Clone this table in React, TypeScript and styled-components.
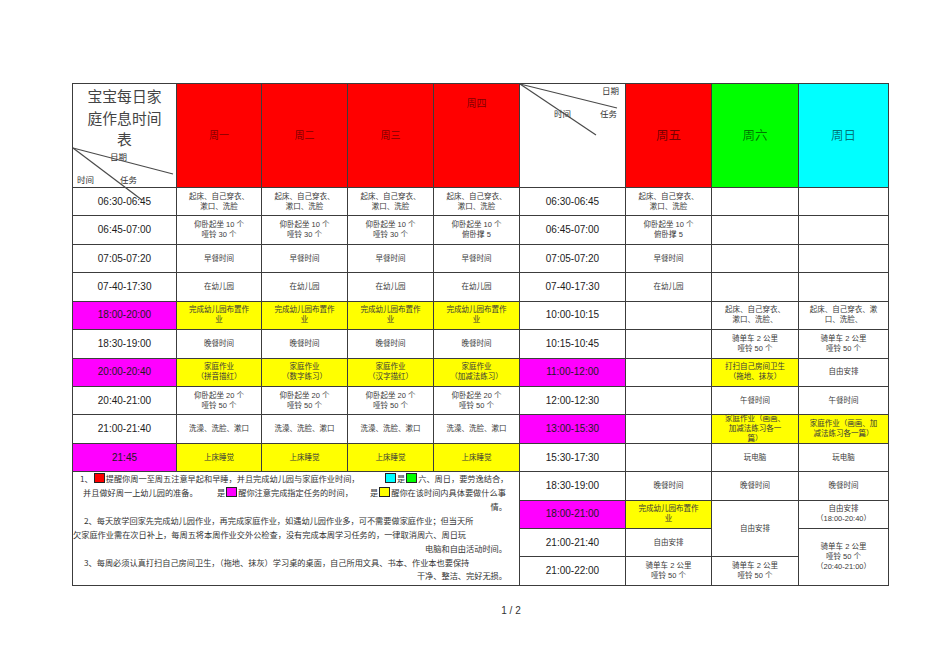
import React from 'react';
import styled, { createGlobalStyle } from 'styled-components';

const RED = '#ff0000';
const GREEN = '#00ff00';
const CYAN = '#00ffff';
const YELLOW = '#ffff00';
const PINK = '#ff00ff';

const GlobalStyle = createGlobalStyle`
  html, body {
    margin: 0;
    padding: 0;
    background: #ffffff;
  }
  body {
    font-family: "Liberation Sans", "Noto Sans CJK SC", sans-serif;
    color: #333;
  }
`;

const Page = styled.div`
  width: 950px;
  padding: 83px 0 0 72px;
  box-sizing: border-box;
`;

const Sheet = styled.div`
  display: grid;
  grid-template-columns: 103px 84px 85px 85px 85px 105px 85px 86px 89px;
  grid-template-rows: 103px repeat(14, 27.43px);
  gap: 1px;
  padding: 1px;
  width: max-content;
  background: #3c3c3c;
`;

const Cell = styled.div<{ $bg?: string; $span?: number }>`
  background: ${(p) => p.$bg || '#ffffff'};
  grid-row: ${(p) => (p.$span ? `span ${p.$span}` : 'auto')};
  display: flex;
  flex-direction: column;
  align-items: center;
  justify-content: center;
  text-align: center;
  font-family: "Liberation Sans", "Noto Sans CJK SC", sans-serif;
  font-size: 7.5px;
  line-height: 10px;
  color: #3a3a3a;
  white-space: nowrap;
  overflow: visible;
`;

const TimeCell = styled(Cell)`
  font-size: 10px;
  color: #1c1c1c;
`;

const DayHead = styled(Cell)<{ $big?: boolean; $top?: boolean }>`
  font-size: ${(p) => (p.$big ? '12.5px' : '10px')};
  color: rgba(0, 0, 0, 0.55);
  justify-content: ${(p) => (p.$top ? 'flex-start' : 'center')};
  padding-top: ${(p) => (p.$top ? '15px' : '0')};
`;

const DiagHead = styled.div`
  position: relative;
  background: #ffffff;
  display: flex;
  flex-direction: column;
  align-items: center;
`;

const Title = styled.div`
  font-family: "Noto Sans CJK SC", sans-serif;
  font-size: 14.8px;
  line-height: 21.5px;
  color: #444;
  text-align: center;
  padding-top: 1px;
`;

const DiagLines = styled.svg`
  position: absolute;
  left: 0;
  top: 0;
  overflow: visible;
  pointer-events: none;
  z-index: 2;
`;

const DiagLabel = styled.span<{ $x: number; $y: number }>`
  position: absolute;
  left: ${(p) => p.$x}px;
  top: ${(p) => p.$y}px;
  font-family: "Noto Sans CJK SC", sans-serif;
  font-size: 8.5px;
  line-height: 10px;
  color: #333;
  white-space: nowrap;
`;

const Notes = styled.div`
  grid-column: 1 / 6;
  grid-row: 12 / 16;
  background: #ffffff;
  font-family: "Noto Sans CJK SC", sans-serif;
  font-size: 8.2px;
  line-height: 13.9px;
  color: #333;
  padding-right: 12px;
`;

const NoteLine = styled.div<{ $right?: boolean; $indent?: number }>`
  display: flex;
  justify-content: ${(p) => (p.$right ? 'flex-end' : 'flex-start')};
  align-items: center;
  padding-left: ${(p) => p.$indent || 0}px;
  white-space: nowrap;
  height: 13.9px;
`;

const Seg = styled.span`
  display: inline-flex;
  align-items: center;
`;

const SegSlot = styled.span<{ $w: number }>`
  display: inline-flex;
  align-items: center;
  width: ${(p) => p.$w}px;
  flex: none;
`;

const Mark = styled.span<{ $color: string }>`
  display: inline-block;
  width: 9px;
  height: 8px;
  margin: 0 1px;
  background: ${(p) => p.$color};
  border: 1px solid #222;
  transform: translateY(-1px);
`;

const Footer = styled.div`
  width: 878px;
  margin-top: 19px;
  text-align: center;
  font-family: "Liberation Sans", sans-serif;
  font-size: 10px;
  color: #333;
`;

type Spec = { t: string[]; bg?: string; time?: boolean; span?: number };

const lines = (t: string[]) =>
  t.map((l, i) => (
    <React.Fragment key={i}>
      {i > 0 && <br />}
      {l}
    </React.Fragment>
  ));

const wake = ['起床、自己穿衣、', '漱口、洗脸'];
const sit30 = ['仰卧起坐  10 个', '哑铃  30 个'];
const sit5 = ['仰卧起坐  10 个', '俯卧撑  5'];
const homeworkK = ['完成幼儿园布置作', '业'];
const sit50 = ['仰卧起坐  20 个', '哑铃  50 个'];
const bike = ['骑单车  2 公里', '哑铃  50 个'];

const rows: Spec[][] = [
  [
    { t: ['06:30-06:45'], time: true },
    { t: wake }, { t: wake }, { t: wake }, { t: wake },
    { t: ['06:30-06:45'], time: true },
    { t: wake }, { t: [] }, { t: [] },
  ],
  [
    { t: ['06:45-07:00'], time: true },
    { t: sit30 }, { t: sit30 }, { t: sit30 }, { t: sit5 },
    { t: ['06:45-07:00'], time: true },
    { t: sit5 }, { t: [] }, { t: [] },
  ],
  [
    { t: ['07:05-07:20'], time: true },
    { t: ['早餐时间'] }, { t: ['早餐时间'] }, { t: ['早餐时间'] }, { t: ['早餐时间'] },
    { t: ['07:05-07:20'], time: true },
    { t: ['早餐时间'] }, { t: [] }, { t: [] },
  ],
  [
    { t: ['07-40-17:30'], time: true },
    { t: ['在幼儿园'] }, { t: ['在幼儿园'] }, { t: ['在幼儿园'] }, { t: ['在幼儿园'] },
    { t: ['07-40-17:30'], time: true },
    { t: ['在幼儿园'] }, { t: [] }, { t: [] },
  ],
  [
    { t: ['18:00-20:00'], time: true, bg: PINK },
    { t: homeworkK, bg: YELLOW }, { t: homeworkK, bg: YELLOW },
    { t: homeworkK, bg: YELLOW }, { t: homeworkK, bg: YELLOW },
    { t: ['10:00-10:15'], time: true },
    { t: [] },
    { t: ['起床、自己穿衣、', '漱口、洗脸、'] },
    { t: ['起床、自己穿衣、漱', '口、洗脸、'] },
  ],
  [
    { t: ['18:30-19:00'], time: true },
    { t: ['晚餐时间'] }, { t: ['晚餐时间'] }, { t: ['晚餐时间'] }, { t: ['晚餐时间'] },
    { t: ['10:15-10:45'], time: true },
    { t: [] }, { t: bike }, { t: bike },
  ],
  [
    { t: ['20:00-20:40'], time: true, bg: PINK },
    { t: ['家庭作业', '（拼音描红）'], bg: YELLOW },
    { t: ['家庭作业', '（数字练习）'], bg: YELLOW },
    { t: ['家庭作业', '（汉字描红）'], bg: YELLOW },
    { t: ['家庭作业', '（加减法练习）'], bg: YELLOW },
    { t: ['11:00-12:00'], time: true, bg: PINK },
    { t: [] },
    { t: ['打扫自己房间卫生', '（拖地、抹灰）'], bg: YELLOW },
    { t: ['自由安排'] },
  ],
  [
    { t: ['20:40-21:00'], time: true },
    { t: sit50 }, { t: sit50 }, { t: sit50 }, { t: sit50 },
    { t: ['12:00-12:30'], time: true },
    { t: [] }, { t: ['午餐时间'] }, { t: ['午餐时间'] },
  ],
  [
    { t: ['21:00-21:40'], time: true },
    { t: ['洗澡、洗脸、漱口'] }, { t: ['洗澡、洗脸、漱口'] },
    { t: ['洗澡、洗脸、漱口'] }, { t: ['洗澡、洗脸、漱口'] },
    { t: ['13:00-15:30'], time: true, bg: PINK },
    { t: [] },
    { t: ['家庭作业（画画、', '加减法练习各一', '篇）'], bg: YELLOW },
    { t: ['家庭作业（画画、加', '减法练习各一篇）'], bg: YELLOW },
  ],
  [
    { t: ['21:45'], time: true, bg: PINK },
    { t: ['上床睡觉'], bg: YELLOW }, { t: ['上床睡觉'], bg: YELLOW },
    { t: ['上床睡觉'], bg: YELLOW }, { t: ['上床睡觉'], bg: YELLOW },
    { t: ['15:30-17:30'], time: true },
    { t: [] }, { t: ['玩电脑'] }, { t: ['玩电脑'] },
  ],
  // notes block sits in columns 1-5 from here down
  [
    { t: ['18:30-19:00'], time: true },
    { t: ['晚餐时间'] }, { t: ['晚餐时间'] }, { t: ['晚餐时间'] },
  ],
  [
    { t: ['18:00-21:00'], time: true, bg: PINK },
    { t: homeworkK, bg: YELLOW },
    { t: ['自由安排'], span: 2 },
    { t: ['自由安排', '（18:00-20:40）'] },
  ],
  [
    { t: ['21:00-21:40'], time: true },
    { t: ['自由安排'] },
    { t: ['骑单车  2 公里', '哑铃  50 个', '（20:40-21:00）'], span: 2 },
  ],
  [
    { t: ['21:00-22:00'], time: true },
    { t: bike }, { t: bike },
  ],
];

const renderCell = (c: Spec, key: string) =>
  c.time ? (
    <TimeCell key={key} $bg={c.bg} $span={c.span}>{lines(c.t)}</TimeCell>
  ) : (
    <Cell key={key} $bg={c.bg} $span={c.span}>{lines(c.t)}</Cell>
  );

export default function App() {
  return (
    <>
      <GlobalStyle />
      <Page>
        <Sheet>
          <DiagHead>
            <Title>
              宝宝每日家<br />庭作息时间<br />表
            </Title>
            <DiagLines width="103" height="103">
              <line x1="0" y1="64" x2="100" y2="90" stroke="#4a4a4a" strokeWidth="1.2" />
              <line x1="0" y1="64" x2="69" y2="116" stroke="#4a4a4a" strokeWidth="1.2" />
            </DiagLines>
            <DiagLabel $x={37} $y={67}>日期</DiagLabel>
            <DiagLabel $x={4} $y={90}>时间</DiagLabel>
            <DiagLabel $x={47} $y={90}>任务</DiagLabel>
          </DiagHead>
          <DayHead $bg={RED}>周一</DayHead>
          <DayHead $bg={RED}>周二</DayHead>
          <DayHead $bg={RED}>周三</DayHead>
          <DayHead $bg={RED} $top>周四</DayHead>
          <DiagHead>
            <DiagLines width="105" height="103">
              <line x1="0" y1="0" x2="97" y2="24" stroke="#4a4a4a" strokeWidth="1.2" />
              <line x1="0" y1="0" x2="76" y2="51" stroke="#4a4a4a" strokeWidth="1.2" />
            </DiagLines>
            <DiagLabel $x={82} $y={1}>日期</DiagLabel>
            <DiagLabel $x={34} $y={24}>时间</DiagLabel>
            <DiagLabel $x={80} $y={24}>任务</DiagLabel>
          </DiagHead>
          <DayHead $bg={RED} $big>周五</DayHead>
          <DayHead $bg={GREEN} $big>周六</DayHead>
          <DayHead $bg={CYAN} $big>周日</DayHead>

          {rows.map((row, r) => row.map((c, i) => renderCell(c, `${r}-${i}`)))}

          <Notes>
            <NoteLine $indent={7}>
              <SegSlot $w={304}>
                1、<Mark $color={RED} />提醒你周一至周五注意早起和早睡，并且完成幼儿园与家庭作业时间，
              </SegSlot>
              <Seg>
                <Mark $color={CYAN} />是<Mark $color={GREEN} />六、周日，要劳逸结合，
              </Seg>
            </NoteLine>
            <NoteLine $indent={10}>
              <SegSlot $w={134}>并且做好周一上幼儿园的准备。</SegSlot>
              <SegSlot $w={153}>
                是<Mark $color={PINK} />醒你注意完成指定任务的时间，
              </SegSlot>
              <Seg>
                是<Mark $color={YELLOW} />醒你在该时间内具体要做什么事
              </Seg>
            </NoteLine>
            <NoteLine $right>情。</NoteLine>
            <NoteLine $indent={11}>
              2、每天放学回家先完成幼儿园作业，再完成家庭作业，如遇幼儿园作业多，可不需要做家庭作业；但当天所
            </NoteLine>
            <NoteLine>
              欠家庭作业需在次日补上，每周五将本周作业交外公检查，没有完成本周学习任务的，一律取消周六、周日玩
            </NoteLine>
            <NoteLine $right>电脑和自由活动时间。</NoteLine>
            <NoteLine $indent={11}>
              3、每周必须认真打扫自己房间卫生，（拖地、抹灰）学习桌的桌面，自己所用文具、书本、作业本也要保持
            </NoteLine>
            <NoteLine $right>干净、整洁、完好无损。</NoteLine>
          </Notes>
        </Sheet>
        <Footer>1 / 2</Footer>
      </Page>
    </>
  );
}
